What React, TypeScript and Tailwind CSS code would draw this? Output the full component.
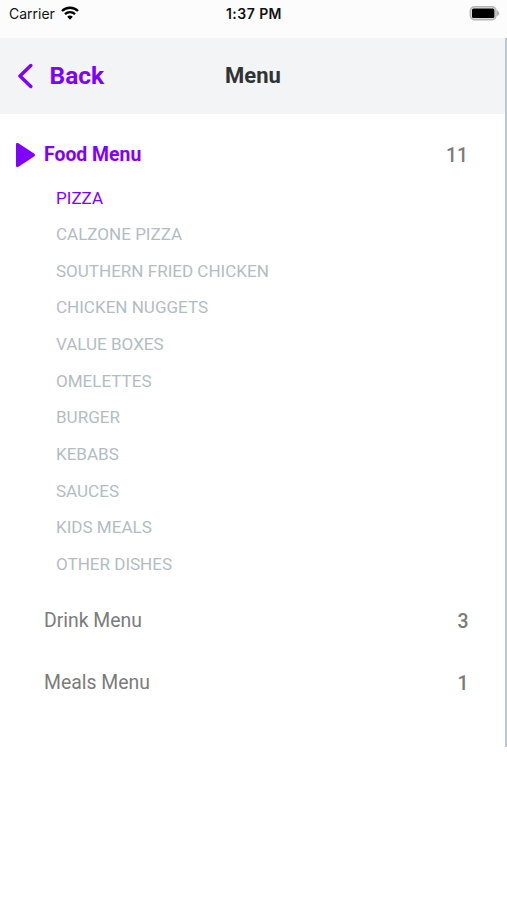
const items = ['PIZZA','CALZONE PIZZA','SOUTHERN FRIED CHICKEN','CHICKEN NUGGETS','VALUE BOXES','OMELETTES','BURGER','KEBABS','SAUCES','KIDS MEALS','OTHER DISHES'];

function Row({ name, count }: { name: string; count: number }) {
  return (
    <div className="flex h-[62px] items-center justify-between pl-11 pr-[36.5px] text-[19.4px] text-[#7b7b7b]">
      <span>{name}</span>
      <span className="pt-px font-medium">{count}</span>
    </div>
  );
}

export default function App() {
  return (
    <div className="h-[900px] w-full overflow-hidden bg-white font-['Roboto',sans-serif]">
      <div className="flex h-[38px] items-start justify-between bg-[#fcfcfc] pl-[8px] pr-[7px] pt-[4px] font-['Inter',sans-serif] text-[14px] leading-[20px] text-[#111]">
        <div className="flex w-[150px] items-center gap-[6px] pl-px">
          <span>Carrier</span>
          <svg className="-mt-[2px]" width="18" height="14" viewBox="0 0 18 14" fill="none" stroke="#000" strokeWidth="2.4">
            <path d="M1 5a11.3 11.3 0 0 1 16 0M4 8.2a7 7 0 0 1 10 0" />
            <path d="M9 13.8 6.2 10.8a4 4 0 0 1 5.6 0Z" fill="#000" stroke="none" />
          </svg>
        </div>
        <span className="font-semibold tracking-[0.45px]">1:37 PM</span>
        <div className="flex w-[150px] justify-end pt-[2px]">
          <svg width="31" height="15" viewBox="0 0 31 15">
            <rect x="1.4" y=".8" width="25.6" height="12.8" rx="4" fill="#e6e6e6" stroke="#b5b5b5" strokeWidth="1.6" />
            <rect x="3" y="2.4" width="22.4" height="9.6" rx="1.6" fill="#000" />
            <path d="M28 4.2q4.6 3 0 6Z" fill="#b0b0b0" />
          </svg>
        </div>
      </div>
      <div className="h-[709px] border-r-2 border-[#bcc5d0]">
        <header className="grid h-[76px] grid-cols-3 items-center bg-[#f2f4f5] pl-[18px] pr-[17px]">
          <div className="flex items-center gap-[16px] text-[24.5px] font-bold text-[#7f00ff]">
            <svg width="16" height="26" viewBox="0 0 16 26" fill="none" stroke="currentColor" strokeWidth="3.4" strokeLinecap="round" strokeLinejoin="round"><path d="M12.800 2.500 2 13l10.800 10.500" /></svg>
            <span className="-ml-[0.5px]">Back</span>
          </div>
          <h1 className="pb-px text-center text-[22px] font-bold text-[#303236]">Menu</h1>
        </header>
        <div className="flex h-[80px] items-center justify-between pl-[15px] pr-[37px] pt-px text-[19.4px]">
          <div className="flex items-center gap-[8px] font-bold text-[#7f00ff]">
            <svg className="translate-y-px" width="21" height="26" viewBox="0 0 21 26" fill="currentColor"><path d="M1 2.500Q1 0 3.400 1.300L19 11.400q2 1.600 0 3.200L3.400 24.700Q1 26 1 23.500Z" /></svg>
            <span>Food Menu</span>
          </div>
          <span className="pt-[2px] font-medium text-[#7b7b7b]">11</span>
        </div>
        <ul className="-mt-[14px] text-[17.05px] text-[#b2bdc2]">
          {items.map((t, i) => (
            <li key={t} className={`flex h-[36.65px] items-center pl-14 ${i === 0 ? 'text-[#7f00ff]' : ''}`}>{t}</li>
          ))}
        </ul>
        <div className="mt-[7px]">
          <Row name="Drink Menu" count={3} />
          <Row name="Meals Menu" count={1} />
        </div>
      </div>
    </div>
  );
}
